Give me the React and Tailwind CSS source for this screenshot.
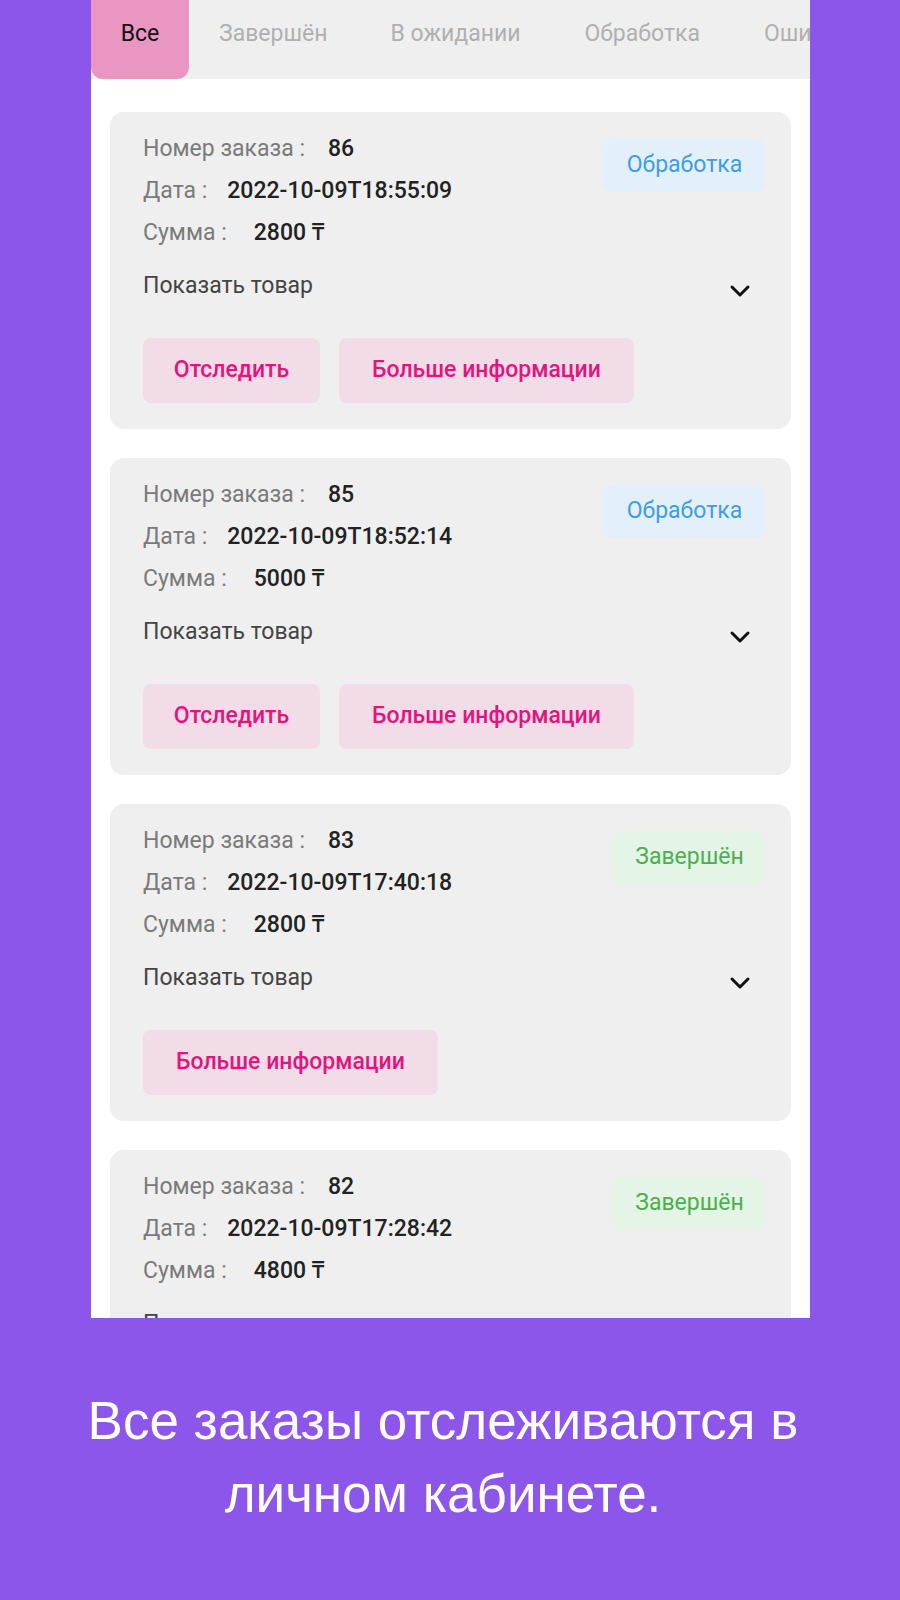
import React from "react";

const orders = [
  { id: "86", date: "2022-10-09T18:55:09", sum: "2800 ₸", status: "processing", track: true },
  { id: "85", date: "2022-10-09T18:52:14", sum: "5000 ₸", status: "processing", track: true },
  { id: "83", date: "2022-10-09T17:40:18", sum: "2800 ₸", status: "done", track: false },
  { id: "82", date: "2022-10-09T17:28:42", sum: "4800 ₸", status: "done", track: false },
];

function Chevron() {
  return (
    <svg width="24" height="15" viewBox="0 0 24 15" fill="none">
      <path d="M4 4 L12 12 L20 4" stroke="#111" strokeWidth="3" strokeLinecap="round" strokeLinejoin="round" />
    </svg>
  );
}

function Card({ o }) {
  return (
    <div className="rounded-[14px] bg-[#efefef] pl-[33px] pr-[25px] pt-[16px] pb-[26px]">
      <div className="flex justify-between">
        <div className="flex flex-col">
          <div className="flex h-[42px] items-center">
            <span className="text-[#7a7a7a]">Номер заказа :</span>
            <span className="ml-[23px] font-medium text-[#222]">{o.id}</span>
          </div>
          <div className="flex h-[42px] items-center">
            <span className="text-[#7a7a7a]">Дата :</span>
            <span className="ml-[20px] font-medium text-[#222]">{o.date}</span>
          </div>
          <div className="flex h-[42px] items-center">
            <span className="text-[#7a7a7a]">Сумма :</span>
            <span className="ml-[27px] font-medium text-[#222]">{o.sum}</span>
          </div>
        </div>
        {o.status === "processing" ? (
          <div className="mt-[11px] flex h-[53px] w-[163px] items-center justify-center rounded-[10px] bg-[#e3f0fc] text-[#3f9de4]">
            Обработка
          </div>
        ) : (
          <div className="mt-[11px] flex h-[53px] w-[153px] items-center justify-center rounded-[10px] bg-[#e4f4e6] text-[#4caf50]">
            Завершён
          </div>
        )}
      </div>
      <div className="mt-[11px] flex h-[42px] items-center justify-between pr-[14px]">
        <span className="text-[#444]">Показать товар</span>
        <div className="mt-[8px]">
          <Chevron />
        </div>
      </div>
      <div className="mt-[31px] flex gap-[19px]">
        {o.track && (
          <div className="flex h-[65px] w-[177px] items-center justify-center rounded-[8px] bg-[#f1dce7] font-medium text-[#e0157f]">
            Отследить
          </div>
        )}
        <div className="flex h-[65px] w-[295px] items-center justify-center rounded-[8px] bg-[#f1dce7] font-medium text-[#e0157f]">
          Больше информации
        </div>
      </div>
    </div>
  );
}

export default function App() {
  return (
    <div className="flex h-[1600px] w-[900px] flex-col bg-[#8c56eb]" style={{ fontFamily: "Roboto, 'Noto Sans', sans-serif" }}>
      <div className="ml-[91px] h-[1318px] w-[719px] overflow-hidden bg-white text-[23px]">
        <div className="flex h-[79px] items-stretch whitespace-nowrap bg-[#efefef] text-[23px]">
          <div className="flex w-[98px] shrink-0 items-center justify-center rounded-b-[12px] bg-[#e996c3] pb-[10px] text-[#111]">
            Все
          </div>
          <div className="flex shrink-0 items-center pb-[10px] pl-[30px] text-[#b0b0b0]">Завершён</div>
          <div className="flex shrink-0 items-center pb-[10px] pl-[63px] text-[#b0b0b0]">В ожидании</div>
          <div className="flex shrink-0 items-center pb-[10px] pl-[64px] text-[#b0b0b0]">Обработка</div>
          <div className="flex shrink-0 items-center pb-[10px] pl-[64px] text-[#b0b0b0]">Ошибка</div>
        </div>
        <div className="flex flex-col gap-[29px] px-[19px] pt-[33px]">
          {orders.map((o) => (
            <Card key={o.id} o={o} />
          ))}
        </div>
      </div>
      <div
        className="mt-[66px] pr-[14px] text-center text-[53px] leading-[73px] text-white"
        style={{ fontFamily: "'Liberation Sans', Arial, sans-serif" }}
      >
        Все заказы отслеживаются в
        <br />
        личном кабинете.
      </div>
    </div>
  );
}
